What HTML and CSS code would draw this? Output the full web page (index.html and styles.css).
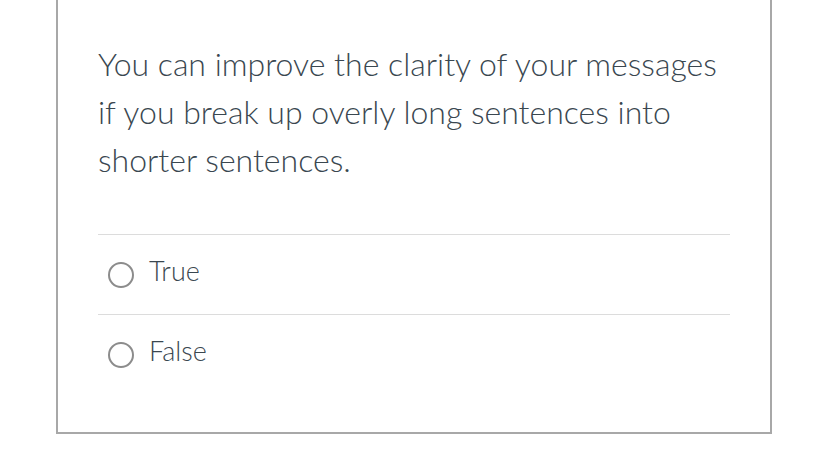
FILE: index.html
```html
<!DOCTYPE html>
<html lang="en">
<head>
<meta charset="utf-8">
<title>Quiz question</title>
<link rel="stylesheet" href="styles.css">
</head>
<body>
  <div class="card">
    <p class="question">You can improve the clarity of your messages if you break up overly long sentences into shorter sentences.</p>
    <div class="answers">
      <label class="option">
        <span class="radio"></span>
        <span class="label">True</span>
      </label>
      <label class="option">
        <span class="radio"></span>
        <span class="label">False</span>
      </label>
    </div>
  </div>
</body>
</html>
```
FILE: styles.css
```css
html, body {
  margin: 0;
  padding: 0;
  background: #ffffff;
}
body {
  font-family: Lato, "Liberation Sans", sans-serif;
  color: #3a4750;
}
.card {
  margin: 0 56px;
  border: 2px solid #a8a8a8;
  border-top: 0;
  padding: 40px 40px 38px;
}
.question {
  margin: 0 0 50px;
  font-size: 32px;
  line-height: 48px;
  font-weight: 300;
}
.answers {
  display: flex;
  flex-direction: column;
}
.option {
  display: flex;
  align-items: center;
  height: 79px;
  border-top: 1px solid #dcdcdc;
  padding-left: 10px;
  gap: 15px;
}
.radio {
  width: 22px;
  height: 22px;
  border: 2px solid #8c8c8c;
  border-radius: 50%;
  flex: none;
}
.label {
  font-size: 27px;
  font-weight: 300;
  line-height: 1;
  padding-bottom: 8px;
}
```
